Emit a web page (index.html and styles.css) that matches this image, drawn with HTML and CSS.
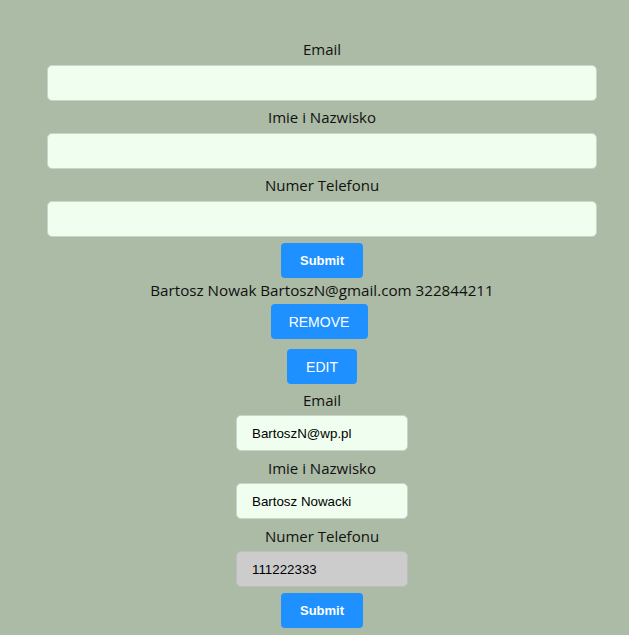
FILE: index.html
```html
<!DOCTYPE html>
<html>
<head>
<meta charset="utf-8">
<link rel="stylesheet" href="styles.css">
</head>
<body>
<div class="app">
  <form class="form">
    <label class="label">Email</label>
    <input class="field field-wide" type="text">
    <label class="label">Imie i Nazwisko</label>
    <input class="field field-wide" type="text">
    <label class="label">Numer Telefonu</label>
    <input class="field field-wide" type="text">
    <button class="btn btn-submit" type="button">Submit</button>
  </form>
  <p class="entry">Bartosz Nowak BartoszN@gmail.com 322844211</p>
  <button class="btn btn-remove" type="button">REMOVE</button>
  <button class="btn btn-edit" type="button">EDIT</button>
  <form class="form form-edit">
    <label class="label">Email</label>
    <input class="field field-narrow" type="text" value="BartoszN@wp.pl">
    <label class="label">Imie i Nazwisko</label>
    <input class="field field-narrow" type="text" value="Bartosz Nowacki">
    <label class="label">Numer Telefonu</label>
    <input class="field field-narrow field-disabled" type="text" value="111222333" disabled>
    <button class="btn btn-submit" type="button">Submit</button>
  </form>
</div>
</body>
</html>
```

FILE: styles.css
```css
html, body {
  margin: 0;
  padding: 0;
  background: #abbba5;
}
body {
  font-family: "Open Sans", "Noto Sans", sans-serif;
  color: #111;
}
.app {
  padding: 33px 0 0 15px;
  display: flex;
  flex-direction: column;
  align-items: center;
}
.form {
  display: flex;
  flex-direction: column;
  align-items: center;
  margin: 0;
}
.label {
  font-size: 15px;
  line-height: 22px;
  margin: 5px 0;
}
.field {
  box-sizing: border-box;
  height: 36px;
  border: 1px solid #cdd2ca;
  border-radius: 5px;
  background: #effeee;
  font-family: "Liberation Sans", Arial, sans-serif;
  font-size: 13.33px;
  color: #000;
  padding: 0 15px;
  margin: 0;
  outline: none;
}
.field-wide { width: 550px; }
.field-narrow { width: 172px; }
.field-disabled {
  background: #cccccc;
  border-color: #bdbdbd;
  color: #000;
}
.btn {
  box-sizing: border-box;
  height: 35px;
  border: none;
  border-radius: 4px;
  background: #1e90ff;
  color: #fff;
  font-family: "Liberation Sans", Arial, sans-serif;
  font-size: 14px;
  padding: 0;
  cursor: pointer;
}
.btn-submit {
  font-weight: bold;
  font-size: 13px;
  width: 82px;
  margin-top: 6px;
}
.entry {
  font-size: 15.2px;
  line-height: 22px;
  margin: 1px 0 0;
}
.btn-remove {
  width: 97px;
  margin: 3px 6px 0 0;
}
.btn-edit {
  width: 70px;
  margin-top: 10px;
}
.form-edit .label {
  margin: 6px 0 4px;
}
.form-edit .label:first-child {
  margin-top: 5px;
}
```
